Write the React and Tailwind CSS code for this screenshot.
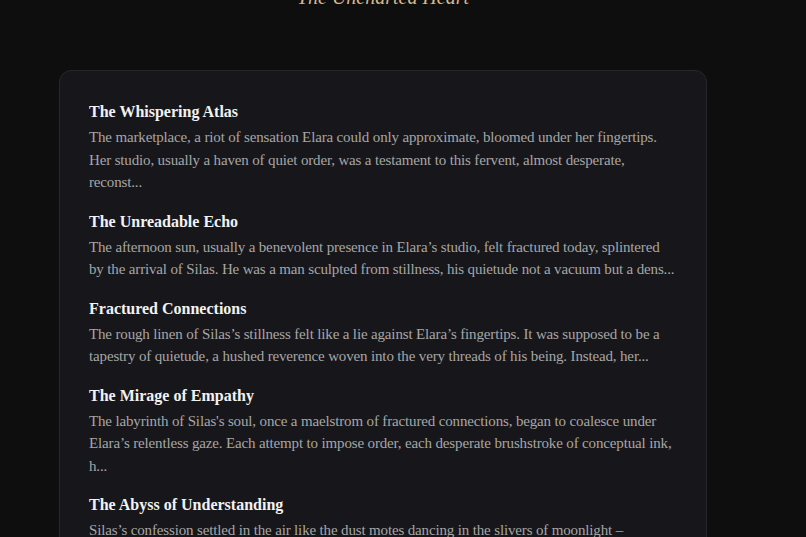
// body text is kept line by line so the wraps match the reference
const CHAPTERS = [
  {
    title: 'The Whispering Atlas',
    lines: [
      'The marketplace, a riot of sensation Elara could only approximate, bloomed under her fingertips.',
      'Her studio, usually a haven of quiet order, was a testament to this fervent, almost desperate,',
      'reconst...',
    ],
  },
  {
    title: 'The Unreadable Echo',
    lines: [
      'The afternoon sun, usually a benevolent presence in Elara\u2019s studio, felt fractured today, splintered',
      'by the arrival of Silas. He was a man sculpted from stillness, his quietude not a vacuum but a dens...',
    ],
  },
  {
    title: 'Fractured Connections',
    lines: [
      'The rough linen of Silas\u2019s stillness felt like a lie against Elara\u2019s fingertips. It was supposed to be a',
      'tapestry of quietude, a hushed reverence woven into the very threads of his being. Instead, her...',
    ],
  },
  {
    title: 'The Mirage of Empathy',
    lines: [
      "The labyrinth of Silas's soul, once a maelstrom of fractured connections, began to coalesce under",
      'Elara\u2019s relentless gaze. Each attempt to impose order, each desperate brushstroke of conceptual ink,',
      'h...',
    ],
  },
  {
    title: 'The Abyss of Understanding',
    lines: [
      'Silas\u2019s confession settled in the air like the dust motes dancing in the slivers of moonlight \u2013',
      'quiet, weightless, and impossible to ignore. Elara traced the edges of his words as if they were raised',
      'l...',
    ],
  },
];

export default function App() {
  return (
    <div className="min-h-screen bg-[#0e0e0e] font-['Liberation_Serif',serif] overflow-hidden">
      <div className="w-[648px] ml-[59px] -mt-[19px]">
        <h1 className="text-center text-[20px] leading-[32px] italic text-[#d6b98a]">The Uncharted Heart</h1>

        <div className="mt-[57px] rounded-xl border border-[#26262b] bg-[#17171b] px-[29px] pt-[29px] pb-8">
          {CHAPTERS.map((c) => (
            <div key={c.title} className="mb-[16px]">
              <h3 className="text-[16px] leading-[24px] font-bold text-[#f2f2f2]">{c.title}</h3>
              <p className="mt-[2px] text-[15px] leading-[22.5px] tracking-[-0.15px] text-[#a6a6a6]">
                {c.lines.map((l, i) => (
                  <span key={i} className="block whitespace-nowrap">{l}</span>
                ))}
              </p>
            </div>
          ))}
        </div>
      </div>
    </div>
  );
}
